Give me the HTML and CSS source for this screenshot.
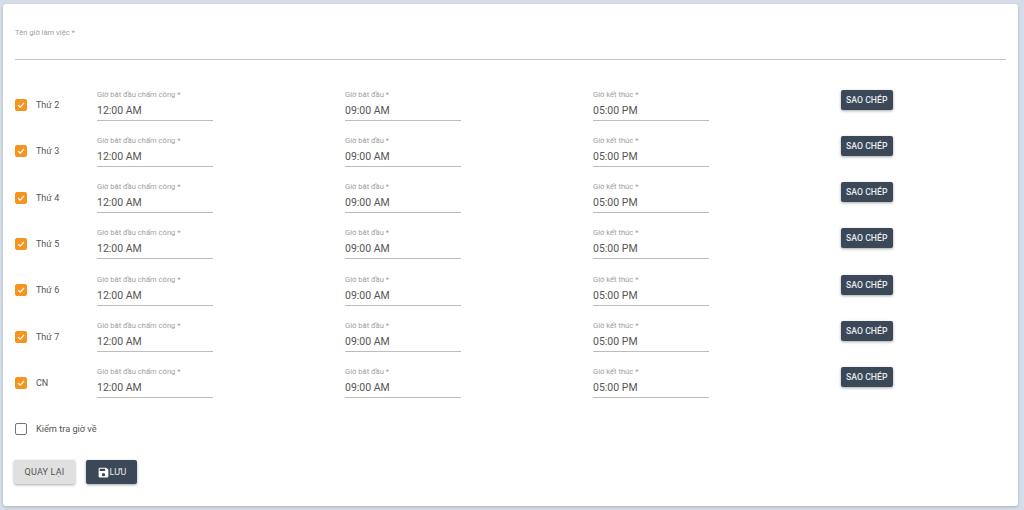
FILE: index.html
```html
<!DOCTYPE html>
<html lang="vi">
<head>
<meta charset="utf-8">
<title>Giờ làm việc</title>
<link rel="stylesheet" href="styles.css">
</head>
<body>
<main class="card">
  <div class="name-field">
    <span class="label">Tên giờ làm việc *</span>
  </div>
  <div class="rows">
    <div class="row">
      <span class="check on"><svg viewBox="0 0 12 12"><path d="M2.5 6.2 5 8.6 9.6 3.6"/></svg></span>
      <span class="day">Thứ 2</span>
      <div class="field"><span class="label">Giờ bắt đầu chấm công *</span><span class="value">12:00 AM</span></div>
      <div class="field"><span class="label">Giờ bắt đầu *</span><span class="value">09:00 AM</span></div>
      <div class="field"><span class="label">Giờ kết thúc *</span><span class="value">05:00 PM</span></div>
      <button class="copy">SAO CHÉP</button>
    </div>
    <div class="row">
      <span class="check on"><svg viewBox="0 0 12 12"><path d="M2.5 6.2 5 8.6 9.6 3.6"/></svg></span>
      <span class="day">Thứ 3</span>
      <div class="field"><span class="label">Giờ bắt đầu chấm công *</span><span class="value">12:00 AM</span></div>
      <div class="field"><span class="label">Giờ bắt đầu *</span><span class="value">09:00 AM</span></div>
      <div class="field"><span class="label">Giờ kết thúc *</span><span class="value">05:00 PM</span></div>
      <button class="copy">SAO CHÉP</button>
    </div>
    <div class="row">
      <span class="check on"><svg viewBox="0 0 12 12"><path d="M2.5 6.2 5 8.6 9.6 3.6"/></svg></span>
      <span class="day">Thứ 4</span>
      <div class="field"><span class="label">Giờ bắt đầu chấm công *</span><span class="value">12:00 AM</span></div>
      <div class="field"><span class="label">Giờ bắt đầu *</span><span class="value">09:00 AM</span></div>
      <div class="field"><span class="label">Giờ kết thúc *</span><span class="value">05:00 PM</span></div>
      <button class="copy">SAO CHÉP</button>
    </div>
    <div class="row">
      <span class="check on"><svg viewBox="0 0 12 12"><path d="M2.5 6.2 5 8.6 9.6 3.6"/></svg></span>
      <span class="day">Thứ 5</span>
      <div class="field"><span class="label">Giờ bắt đầu chấm công *</span><span class="value">12:00 AM</span></div>
      <div class="field"><span class="label">Giờ bắt đầu *</span><span class="value">09:00 AM</span></div>
      <div class="field"><span class="label">Giờ kết thúc *</span><span class="value">05:00 PM</span></div>
      <button class="copy">SAO CHÉP</button>
    </div>
    <div class="row">
      <span class="check on"><svg viewBox="0 0 12 12"><path d="M2.5 6.2 5 8.6 9.6 3.6"/></svg></span>
      <span class="day">Thứ 6</span>
      <div class="field"><span class="label">Giờ bắt đầu chấm công *</span><span class="value">12:00 AM</span></div>
      <div class="field"><span class="label">Giờ bắt đầu *</span><span class="value">09:00 AM</span></div>
      <div class="field"><span class="label">Giờ kết thúc *</span><span class="value">05:00 PM</span></div>
      <button class="copy">SAO CHÉP</button>
    </div>
    <div class="row">
      <span class="check on"><svg viewBox="0 0 12 12"><path d="M2.5 6.2 5 8.6 9.6 3.6"/></svg></span>
      <span class="day">Thứ 7</span>
      <div class="field"><span class="label">Giờ bắt đầu chấm công *</span><span class="value">12:00 AM</span></div>
      <div class="field"><span class="label">Giờ bắt đầu *</span><span class="value">09:00 AM</span></div>
      <div class="field"><span class="label">Giờ kết thúc *</span><span class="value">05:00 PM</span></div>
      <button class="copy">SAO CHÉP</button>
    </div>
    <div class="row">
      <span class="check on"><svg viewBox="0 0 12 12"><path d="M2.5 6.2 5 8.6 9.6 3.6"/></svg></span>
      <span class="day">CN</span>
      <div class="field"><span class="label">Giờ bắt đầu chấm công *</span><span class="value">12:00 AM</span></div>
      <div class="field"><span class="label">Giờ bắt đầu *</span><span class="value">09:00 AM</span></div>
      <div class="field"><span class="label">Giờ kết thúc *</span><span class="value">05:00 PM</span></div>
      <button class="copy">SAO CHÉP</button>
    </div>
  </div>
  <div class="return-check">
    <span class="check"></span>
    <span class="day">Kiểm tra giờ về</span>
  </div>
  <div class="actions">
    <button class="back">QUAY LẠI</button>
    <button class="save"><svg viewBox="0 0 24 24"><path d="M17 3H5a2 2 0 0 0-2 2v14a2 2 0 0 0 2 2h14a2 2 0 0 0 2-2V7l-4-4zm-5 16a3 3 0 1 1 0-6 3 3 0 0 1 0 6zm3-10H5V5h10v4z"/></svg>LƯU</button>
  </div>
</main>
</body>
</html>
```
FILE: styles.css
```css
* { box-sizing: border-box; }
html, body { height: 100%; }
body {
  margin: 0;
  background: #d5dde8;
  font-family: Roboto, "Liberation Sans", sans-serif;
  padding: 4px 6px 4px 3px;
  overflow: hidden;
}
.card {
  height: 502px;
  background: #fff;
  border-radius: 3px;
  box-shadow: 0 1px 3px rgba(0,0,0,.2);
  padding: 24px 12px 0 12px;
}
.label {
  display: block;
  font-size: 7.6px;
  line-height: 10px;
  color: #a0a0a0;
}
.name-field {
  height: 32px;
  border-bottom: 1px solid #c4c4c4;
}
.rows { margin-top: 29.5px; }
.row {
  display: flex;
  align-items: flex-start;
  height: 46.33px;
}
.check {
  flex: none;
  width: 12px;
  height: 12px;
  border: 1.5px solid #757575;
  border-radius: 2px;
  margin-top: 9.5px;
  background: #fff;
  display: block;
}
.check.on {
  background: #f7941d;
  border-color: #f7941d;
}
.check svg {
  display: block;
  width: 100%;
  height: 100%;
  fill: none;
  stroke: #fff;
  stroke-width: 1.5;
}
.day {
  flex: none;
  width: 61px;
  margin-left: 9px;
  margin-top: 9.5px;
  font-size: 9px;
  line-height: 12px;
  color: #555;
}
.field {
  flex: none;
  width: 116px;
  height: 31px;
  margin-right: 132px;
  border-bottom: 1px solid #bcbcbc;
}
.value {
  display: block;
  margin-top: 4px;
  font-size: 10.5px;
  line-height: 14px;
  color: #555;
}
.copy {
  flex: none;
  width: 51.5px;
  height: 20px;
  padding: 0;
  border: 0;
  border-radius: 2px;
  background: #3b4858;
  color: #e6e9ee;
  font: 500 8.7px/20px Roboto, "Liberation Sans", sans-serif;
  box-shadow: 0 1px 3px rgba(0,0,0,.35);
}
.return-check {
  display: flex;
  align-items: flex-start;
  margin-top: 9.5px;
}
.return-check .check { margin-top: 0; }
.return-check .day { margin-top: 0; width: auto; font-size: 9.2px; }
.actions {
  display: flex;
  gap: 11px;
  margin-top: 25px;
  margin-left: -1px;
}
.back, .save {
  height: 24px;
  border: 0;
  border-radius: 2px;
  padding: 0;
  font: 400 9px/24px Roboto, "Liberation Sans", sans-serif;
  box-shadow: 0 1px 3px rgba(0,0,0,.35);
}
.back {
  width: 61px;
  background: #e0e0e0;
  color: #555;
  letter-spacing: .2px;
}
.save {
  width: 51px;
  background: #3b4858;
  color: #e6e9ee;
  display: flex;
  align-items: center;
  justify-content: center;
}
.save svg {
  width: 13px;
  height: 13px;
  fill: #fff;
  flex: none;
}
```
